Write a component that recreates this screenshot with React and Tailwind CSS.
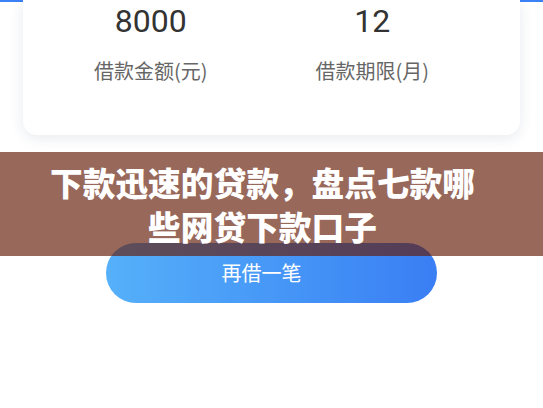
const cjk = { fontFamily: '"Noto Sans CJK SC", "Noto Sans", sans-serif' };

const Stat = ({ value, label }) => (
  <div className="flex flex-col items-center">
    <span className="text-[32px] leading-[40px] text-[#333333]" style={{ fontFamily: 'Roboto, "Noto Sans CJK SC", sans-serif' }}>
      {value}
    </span>
    <span className="mt-[17px] text-[20px] leading-[26px] text-[#666666]" style={cjk}>
      {label}
    </span>
  </div>
);

export default function App() {
  return (
    <div className="relative w-[543px] h-[408px] overflow-hidden bg-white">
      <div className="h-[2px] bg-[#3b82f6]" />

      {/* summary card, its top tucked under the header */}
      <div className="relative -mt-[2px] mx-[23px] h-[135px] rounded-b-[14px] bg-white shadow-[0_3px_14px_rgba(30,50,90,0.10)]">
        <div className="grid grid-cols-2 pl-[17px] pr-[37px] pt-[1px]">
          <Stat value="8000" label="借款金额(元)" />
          <Stat value="12" label="借款期限(月)" />
        </div>
      </div>

      <div className="flex justify-center mt-[108px]">
        <button
          className="w-[331px] h-[60px] pr-[20px] rounded-full bg-gradient-to-r from-[#56b0f9] to-[#3a7ef4] text-white text-[20px]"
          style={cjk}
        >
          再借一笔
        </button>
      </div>

      {/* title banner laid over the page */}
      <div className="absolute left-0 right-0 top-[152px] h-[104px] flex items-center justify-center pr-[18px] bg-[rgba(98,26,6,0.66)]">
        <h1
          className="text-white text-[32.7px] leading-[44px] font-black text-center"
          style={cjk}
        >
          下款迅速的贷款，盘点七款哪
          <br />
          些网贷下款口子
        </h1>
      </div>
    </div>
  );
}
